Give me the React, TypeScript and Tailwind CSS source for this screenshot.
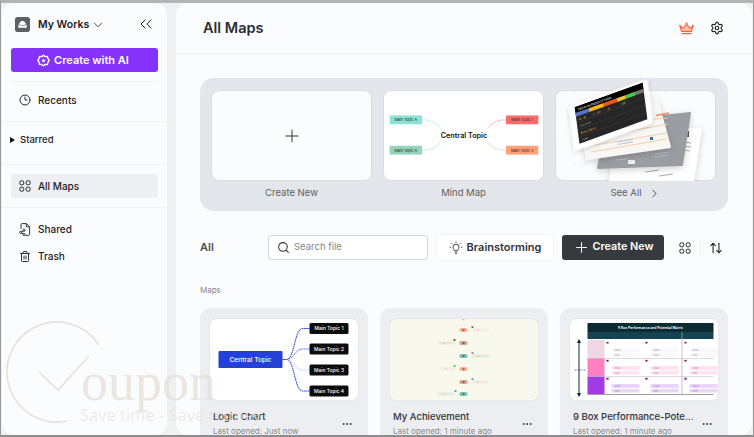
import React from "react";
import { ChevronDown, ChevronsLeft, Clock3, Plus, Trash2, Search, ArrowUpDown, ChevronRight, Settings, Ellipsis } from "lucide-react";

const F = "font-['Inter','Noto_Sans',sans-serif]";

function GridIcon({ className }: { className?: string }) {
  return (
    <svg viewBox="0 0 12 12" className={className} fill="none" stroke="currentColor" strokeWidth="1">
      <rect x="0.8" y="0.8" width="4" height="4" rx="1.6" />
      <rect x="7.2" y="0.8" width="4" height="4" rx="1.6" />
      <rect x="0.8" y="7.2" width="4" height="4" rx="1.6" />
      <rect x="7.2" y="7.2" width="4" height="4" rx="1.6" />
    </svg>
  );
}

function SharedIcon() {
  return (
    <svg viewBox="0 0 12 13" className="h-[13px] w-[12px]" fill="none" stroke="#1f2226" strokeWidth="0.9">
      <path d="M2 6V1.5C2 1 2.4 .6 3 .6H7.5L10.6 3.6V11.5C10.6 12 10.2 12.4 9.6 12.4H6.5" strokeLinejoin="round" />
      <path d="M7.3 .8V3.8H10.4" />
      <circle cx="1.8" cy="9.4" r="1.1" />
      <circle cx="5" cy="7.3" r="1.1" />
      <circle cx="5" cy="11.5" r="1.1" />
      <path d="M2.8 8.8L4 8M2.8 10L4 10.9" />
    </svg>
  );
}

function BulbIcon() {
  return (
    <svg viewBox="0 0 14 14" className="h-[14px] w-[14px]" fill="none" stroke="#33363b" strokeWidth="0.9">
      <path d="M5.4 9.6C5.2 8.6 4 8 4 6.2A3 3 0 0 1 10 6.2C10 8 8.8 8.6 8.6 9.6Z" strokeLinejoin="round" />
      <path d="M5.6 11.2H8.4M6.2 12.8H7.8" />
      <path d="M7 .6V1.9M2.6 2.2L3.5 3.1M11.4 2.2L10.5 3.1M.6 6.2H1.9M12.1 6.2H13.4" />
    </svg>
  );
}

function CrownIcon() {
  return (
    <svg viewBox="0 0 15 13" className="h-[13px] w-[15px]">
      <path d="M1.2 4.2L4.2 6.4L7.5 2L10.8 6.4L13.8 4.2L12.6 9.4H2.4Z" fill="#ffc4b4" stroke="#f9603e" strokeWidth="1.1" strokeLinejoin="round" />
      <path d="M2.6 11.6H12.4" stroke="#f9603e" strokeWidth="1.3" />
      <circle cx="7.5" cy="1.4" r="1" fill="#f9603e" />
      <circle cx="1" cy="3.6" r="0.9" fill="#f9603e" />
      <circle cx="14" cy="3.6" r="0.9" fill="#f9603e" />
    </svg>
  );
}

function NavRow({ icon, label, active }: { icon: React.ReactNode; label: string; active?: boolean }) {
  return (
    <div className={`flex h-6 items-center gap-[7px] rounded-[3px] pl-[8px] text-[10px] font-medium text-[#1f2226] ${active ? "bg-[#edeff2]" : ""}`}>
      {icon}
      <span>{label}</span>
    </div>
  );
}

function MindPreview() {
  const box = (x: number, y: number, fill: string, t: string) => (
    <g>
      <rect x={x} y={y} width="33" height="9" fill={fill} />
      <text x={x + 16.5} y={y + 6} fontSize="3.8" fill="#222" textAnchor="middle" fontFamily="Inter">{t}</text>
    </g>
  );
  return (
    <svg viewBox="0 0 161 91" className="h-full w-full">
      {box(5, 25, "#8ae3d6", "Main Topic A")}
      {box(5, 56, "#95d3b8", "Main Topic A")}
      {box(124, 25, "#ff6b6b", "Main Topic 1")}
      {box(124, 56, "#ffa078", "Main Topic 2")}
      <path d="M38 29.5C47 29.5 51 32 57 38" stroke="#a5e6dc" fill="none" strokeWidth="0.8" strokeDasharray="1.5 .6" />
      <path d="M38 60.5C47 60.5 51 58 57 53" stroke="#a5d9c4" fill="none" strokeWidth="0.8" strokeDasharray="1.5 .6" />
      <path d="M124 29.5C115 29.5 111 32 105 38" stroke="#ff8484" fill="none" strokeWidth="0.8" strokeDasharray="1.5 .6" />
      <path d="M124 60.5C115 60.5 111 58 105 53" stroke="#ffb190" fill="none" strokeWidth="0.8" strokeDasharray="1.5 .6" />
      <text x="81" y="48" fontSize="7.4" fontWeight="600" textAnchor="middle" fill="#111" fontFamily="Inter">Central Topic</text>
    </svg>
  );
}

function StackPreview() {
  return (
    <svg viewBox="0 0 161 91" className="absolute left-[-1px] top-[-1px] h-[91px] w-[161px] overflow-visible">
      <defs>
        <filter id="sh" x="-20%" y="-20%" width="140%" height="140%">
          <feDropShadow dx="0" dy="2" stdDeviation="3" floodColor="#000" floodOpacity="0.18" />
        </filter>
        <clipPath id="cl"><path d="M-10 -30H161V83A8 8 0 0 1 153 91H-10Z" /></clipPath>
        <pattern id="dots" width="9" height="9" patternUnits="userSpaceOnUse">
          <circle cx="2" cy="2" r=".5" fill="#e4e6ea" />
        </pattern>
      </defs>
      <rect width="161" height="91" rx="8" fill="url(#dots)" />
      <g clipPath="url(#cl)">
        <polygon points="62,38 147,38 137,104 52,104" fill="#fff" filter="url(#sh)" />
        <path d="M128 52l8 1M128 56l8 1M128 60l7 1M90 82l14-2M104 86l14-2" stroke="#aaa" strokeWidth="1" />
        <rect x="129" y="41" width="5" height="6" fill="#555" />
        <polygon points="52,32 135,23 127,75 43,78" fill="#9a9da1" stroke="#9a9da1" strokeWidth="2" strokeLinejoin="round" filter="url(#sh)" />
        <rect x="73" y="70" width="7" height="4" fill="#eee" />
        <path d="M100 64l14 -2M100 67l14 -2M60 70l12 -1" stroke="#b8babd" strokeWidth="1" />
        <rect x="109" y="48" width="3" height="3" fill="#eee" />
        <polygon points="25,25 102,9 115,57 32,69" fill="#f8f7f3" stroke="#f8f7f3" strokeWidth="2" strokeLinejoin="round" filter="url(#sh)" />
        <path d="M101 25.5L114 23" stroke="#ef8a5f" strokeWidth="1.6" />
        <path d="M36 62L112 49M40 55L112 43M70 42L113 34M88 30L113 28" stroke="#f3cfae" strokeWidth="1" />
        <path d="M62 52L78 49.5M62 54.5L78 52" stroke="#b9c4e4" strokeWidth="1" />
        <rect x="95" y="47" width="3" height="3" fill="#2f6fb0" />
      </g>
      <g transform="matrix(.78 -.28 .095 .73 14 17)">
        <rect x="0" y="0" width="100" height="60" rx="3" fill="#fff" stroke="#fff" strokeWidth="1" filter="url(#sh)" />
        <rect x="7" y="3" width="87" height="50" fill="#262626" />
        <rect x="7" y="3" width="87" height="8" fill="#000" />
        <rect x="7" y="11" width="17" height="5" fill="#5572c8" />
        <rect x="24" y="11" width="19" height="5" fill="#f5b617" />
        <rect x="43" y="11" width="17" height="5" fill="#f0551f" />
        <rect x="60" y="11" width="11" height="5" fill="#f5c542" />
        <rect x="71" y="11" width="12" height="5" fill="#4cc94c" />
        <rect x="83" y="11" width="11" height="5" fill="#777" />
        <text x="10" y="9" fontSize="4" fill="#fff" fontFamily="Inter">TEAM INTRODUCTION</text>
        <path d="M7 24h87M7 34h87M7 44h87" stroke="#444" strokeWidth=".5" />
        <text x="10" y="22" fontSize="3.6" fill="#e8bd3a" fontFamily="Inter">A - B</text>
        <text x="28" y="22" fontSize="3.6" fill="#e8bd3a" fontFamily="Inter">1 - 20</text>
        <text x="47" y="22" fontSize="3.6" fill="#e8bd3a" fontFamily="Inter">8</text>
        <text x="64" y="22" fontSize="3.6" fill="#e8bd3a" fontFamily="Inter">138</text>
        <text x="10" y="31" fontSize="3.2" fill="#bbb" fontFamily="Inter">Overview</text>
        <text x="10" y="41" fontSize="3.6" fill="#e8bd3a" fontFamily="Inter">Brave Spirit</text>
        <text x="10" y="50" fontSize="3.2" fill="#bbb" fontFamily="Inter">Goals</text>
      </g>
    </svg>
  );
}

function LogicPreview() {
  const ys = [9.5, 30, 51, 72];
  return (
    <svg viewBox="0 0 147 81" className="h-full w-full">
      <rect x="8" y="32" width="64" height="17" rx="1" fill="#2440d8" />
      <text x="40" y="43.3" fontSize="6.6" fill="#fff" textAnchor="middle" fontWeight="500" fontFamily="Inter">Central Topic</text>
      {ys.map((y, i) => (
        <g key={y}>
          <path d={`M72 40.5H76C84 40.5 84 ${y} 92 ${y}H99`} fill="none" stroke={i === 2 ? "#c9d2f7" : i === 1 ? "#5b73ea" : "#2440d8"} strokeWidth="1" strokeDasharray="1.6 .5" />
          <rect x="99" y={y - 5.5} width="39" height="11" rx="1.5" fill="#0c0c0c" />
          <text x="118.5" y={y + 1.8} fontSize="4.9" fill="#fff" textAnchor="middle" fontWeight="500" fontFamily="Inter">{`Main Topic ${i + 1}`}</text>
        </g>
      ))}
    </svg>
  );
}

function AchievementPreview() {
  const rows: [number, string, number, number, string, string, number][] = [
    [11, "#ffae98", 82, 17, "#f9ebe2", "#444", 81],
    [24, "#d6a98c", 48, 16, "#f0e6d8", "#333", 63],
    [37, "#7cc4b8", 82, 17, "#e0ecdf", "#668", 81],
    [50, "#ffb296", 50, 15, "#f9ebe2", "#2a2", 63],
    [63, "#d6a98c", 82, 16, "#f5e9da", "#28c", 81],
    [75, "#7cc4b8", 47, 17, "#e0ecdf", "#28a", 64],
  ];
  return (
    <svg viewBox="0 0 147 81" className="h-full w-full">
      <rect width="147" height="81" fill="#f8f8ec" />
      <rect x="72" y="0" width="2" height="1.5" fill="#ffae98" />
      {rows.map(([y, c, x, w, bg, fc, fx]) => (
        <g key={y}>
          <rect x="69" y={y - 2} width="8" height="4" rx="1.5" fill={c} />
          <rect x="72" y={y - 0.5} width="2" height="1" fill="#222" />
          <rect x={x} y={y - 1.5} width={w} height="3" fill={bg} />
          <rect x={x + 5} y={y - 0.4} width="1" height="0.8" fill="#a88" />
          <rect x={fx} y={y - 3.6} width="2" height="1.4" fill={fc} />
        </g>
      ))}
    </svg>
  );
}

function NineBoxPreview() {
  const colTints = ["#fbf6fb", "#ffe3ef", "#ead6fa"];
  const sides = ["#eed6e4", "#ff7fc0", "#a23be3"];
  const ys = [21, 39, 57];
  const xs = [34, 73, 112];
  return (
    <svg viewBox="0 0 147 81" className="h-full w-full">
      <rect width="147" height="81" fill="#fff" />
      <rect x="17" y="4" width="126" height="9" fill="#0b2a33" />
      <text x="80" y="10" fontSize="3.4" fill="#fff" textAnchor="middle" fontWeight="600" fontFamily="Inter">9 Box Performance and Potential Matrix</text>
      <rect x="17" y="13" width="126" height="7" fill="#154352" />
      {sides.map((c, i) => (
        <rect key={c} x="17" y={ys[i]} width="17" height="18" fill={c} />
      ))}
      {ys.map((y, r) =>
        xs.map((x) => (
          <g key={x + "-" + y}>
            <rect x={x + 1} y={y + 1} width="4" height="3.5" fill={colTints[r]} />
            <rect x={x + 2} y={y + 2} width="2" height="1.4" fill="#5a1050" />
            <rect x={x + 7} y={y + 8} width="28" height="4" fill={colTints[r]} />
            <rect x={x + 7} y={y + 13} width="28" height="3.5" fill={colTints[r]} />
            <path d={`M${x + 10} ${y + 10}h6M${x + 10} ${y + 15}h5`} stroke="#8a5a9a" strokeWidth=".5" />
          </g>
        ))
      )}
      <path d="M17 39.5H143M17 57.5H143" stroke="#ccc" strokeWidth=".7" />
      <path d="M17 75.5H143" stroke="#888" strokeWidth=".8" />
      <path d="M111.5 13V75" stroke="#aaa" strokeWidth=".7" />
      <path d="M8.5 21V77" stroke="#0b2a33" strokeWidth="1" />
      <path d="M6.5 24L8.5 20L10.5 24ZM6.5 74L8.5 78L10.5 74Z" fill="#0b2a33" />
      <path d="M4 51H15" stroke="#333" strokeWidth=".6" strokeDasharray="2 1" />
    </svg>
  );
}

function TemplateCard({ label, children, extra }: { label: string; children: React.ReactNode; extra?: React.ReactNode }) {
  return (
    <div className="flex w-[161px] flex-col">
      <div className="relative h-[91px] rounded-lg border border-[#d9dce1] bg-[#fbfcfe]">{children}</div>
      <div className="mt-[5px] flex h-[14px] items-center justify-center gap-[6px] text-[9.5px] text-[#5d6066]">
        <span>{label}</span>
        {extra}
      </div>
    </div>
  );
}

function FileCard({ title, sub, children }: { title: string; sub: string; children: React.ReactNode }) {
  return (
    <div className="w-[168px] shrink-0 rounded-t-[10px] bg-[#eceef1] px-[10px] pt-[11px]">
      <div className="h-[81px] overflow-hidden rounded-md bg-white shadow-[0_0_1px_rgba(0,0,0,0.25)]">{children}</div>
      <div className="mt-[10px] flex items-start justify-between pl-[3px]">
        <div className="min-w-0">
          <div className="text-[9.5px] font-medium leading-[13px] text-[#303338]">{title}</div>
          <div className="mt-[3px] text-[8px] leading-[11px] text-[#85888e]">{sub}</div>
        </div>
        <Ellipsis className="mr-[5px] mt-[8px] h-[12px] w-[12px] shrink-0 text-[#333]" strokeWidth={2} />
      </div>
    </div>
  );
}

export default function App() {
  return (
    <div className={`${F} relative flex h-[437px] w-[754px] gap-[9px] overflow-hidden border-x border-x-[#9a9a9a] border-t-[3px] border-b-[2px] border-t-[#b4b4b4] border-b-[#8c8c8c] bg-[#eef0f2] pl-[1px] pr-[1px]`}>
      <aside className="flex w-[165px] shrink-0 flex-col rounded-xl bg-[#fbfcfe]">
        <div className="flex h-[45px] shrink-0 items-start justify-between pl-[13px] pr-[11px] pt-[14px]">
          <div className="flex items-center">
            <svg viewBox="0 0 16 16" className="h-[15px] w-[15px]">
              <rect width="16" height="16" rx="3" fill="#5c5f63" />
              <path d="M3.5 8.5L5.5 5.5C6.5 4 9.5 4 10.5 5.5L12.5 8.5V11.5H3.5Z" fill="#fff" />
              <path d="M3.5 8.5H6.3C6.8 9.7 9.2 9.7 9.7 8.5H12.5" stroke="#5c5f63" strokeWidth=".8" fill="none" />
            </svg>
            <span className="ml-[8px] text-[10.5px] font-semibold text-[#1d2024]">My Works</span>
            <ChevronDown className="ml-[2px] h-[14px] w-[14px] text-[#333]" strokeWidth={1.5} />
          </div>
          <ChevronsLeft className="h-[20px] w-[20px] -translate-y-[3px] text-[#222]" strokeWidth={1.2} />
        </div>
        <div className="px-[9px]">
          <div className="flex h-6 items-center justify-center gap-[4px] rounded-[3px] bg-[#8533fb] pr-[3px] text-[11px] font-semibold text-white">
            <svg viewBox="0 0 16 16" className="h-[13px] w-[13px]" fill="none" stroke="#fff" strokeWidth="1.7">
              <path d="M8 1.5L10 3.2L12.8 3L13.5 5.8L15 8L13.5 10.2L12.8 13L10 12.8L8 14.5L5.5 13L3 12.8L2.6 10L1 8L2.6 5.8L3.2 3L6 3.2Z" strokeLinejoin="round" />
              <path d="M8 5.5L8.8 7.2L10.6 7.4L9.2 8.6L9.6 10.4L8 9.5L6.4 10.4L6.8 8.6L5.4 7.4L7.2 7.2Z" fill="#fff" stroke="none" />
            </svg>
            <span>Create with AI</span>
          </div>
          <div className="mt-[9px] border-t border-[#f0f1f4]" />
          <div className="mt-[6px]">
            <NavRow icon={<Clock3 className="h-[12px] w-[12px]" strokeWidth={1.9} />} label="Recents" />
          </div>
        </div>
        <div className="mt-[9px] border-t border-[#f0f1f4]" />
        <div className="flex h-[42px] items-start gap-[5px] pl-[8px] pt-[12px] text-[9.5px] font-medium leading-[12px] text-[#1f2226]">
          <svg viewBox="0 0 5 6" className="mt-[3px] h-[6px] w-[5px]"><path d="M0 0L5 3L0 6Z" fill="#111" /></svg>
          <span>Starred</span>
        </div>
        <div className="border-t border-[#f0f1f4]" />
        <div className="mt-[9px] px-[9px]">
          <NavRow active icon={<GridIcon className="h-[12px] w-[12px] text-[#222]" />} label="All Maps" />
        </div>
        <div className="mt-[9px] border-t border-[#f0f1f4]" />
        <div className="mt-[9px] flex flex-col gap-[3px] px-[9px]">
          <NavRow icon={<SharedIcon />} label="Shared" />
          <NavRow icon={<Trash2 className="h-[13px] w-[12px]" strokeWidth={1.9} />} label="Trash" />
        </div>
      </aside>

      <main className="flex min-w-0 flex-1 flex-col overflow-hidden rounded-xl bg-[#fbfcfe]">
        <header className="flex h-[51px] shrink-0 items-center justify-between border-b border-[#f0f1f4] pl-[27px] pr-[28px]">
          <h1 className="text-[14.5px] font-semibold text-[#2b2e33]">All Maps</h1>
          <div className="flex items-center gap-[16px]">
            <CrownIcon />
            <Settings className="h-[14px] w-[14px] text-[#222]" strokeWidth={2} />
          </div>
        </header>

        <div className="px-[24px] pt-[24px]">
          <section className="flex h-[133px] gap-[11px] rounded-[14px] bg-[#e3e6ea] px-[11px] pt-[12px]">
            <TemplateCard label="Create New">
              <div className="flex h-full items-center justify-center">
                <Plus className="h-[20px] w-[20px] text-[#333]" strokeWidth={1.2} />
              </div>
            </TemplateCard>
            <TemplateCard label="Mind Map">
              <div className="h-full overflow-hidden rounded-lg bg-white"><MindPreview /></div>
            </TemplateCard>
            <TemplateCard label="See All" extra={<ChevronRight className="h-[13px] w-[13px] text-[#333]" strokeWidth={1.6} />}>
              <StackPreview />
            </TemplateCard>
          </section>

          <div className="mt-[24px] flex h-[25px] items-center">
            <span className="w-[68px] text-[11px] font-semibold text-[#4a4d52]">All</span>
            <div className="flex h-[25px] w-[160px] items-center gap-[4px] rounded-[3px] border border-[#d4d7dc] bg-white px-[8px] text-[9.5px] text-[#85888e]">
              <Search className="h-[13px] w-[13px] text-[#333]" strokeWidth={1.9} />
              <span>Search file</span>
            </div>
            <div className="ml-[9px] flex h-[25px] w-[116px] items-center justify-center gap-[4px] rounded-[3px] bg-white text-[11px] font-semibold text-[#33363b] shadow-[0_0_3px_rgba(0,0,0,0.08)]">
              <BulbIcon />
              <span>Brainstorming</span>
            </div>
            <div className="ml-[9px] flex h-[25px] w-[102px] items-center justify-center gap-[3px] rounded-[3px] bg-[#36393d] text-[10.8px] font-semibold text-white">
              <Plus className="h-[17px] w-[17px]" strokeWidth={1.4} />
              <span>Create New</span>
            </div>
            <GridIcon className="ml-[15px] h-[12px] w-[12px] text-[#222]" />
            <div className="ml-[9px] h-[14px] border-l border-[#f0f1f4]" />
            <ArrowUpDown className="ml-[8px] h-[14px] w-[14px] text-[#222]" strokeWidth={1.8} />
          </div>

          <div className="mt-[25px] text-[8px] leading-[11px] text-[#85888e]">Maps</div>

          <div className="mt-[12px] flex gap-[12px]">
            <FileCard title="Logic Chart" sub="Last opened: Just now"><LogicPreview /></FileCard>
            <FileCard title="My Achievement" sub="Last opened: 1 minute ago"><AchievementPreview /></FileCard>
            <FileCard title="9 Box Performance-Pote..." sub="Last opened: 1 minute ago"><NineBoxPreview /></FileCard>
          </div>
        </div>
      </main>

      <svg viewBox="0 0 260 120" className="pointer-events-none absolute bottom-[0px] left-[0px] h-[120px] w-[260px]">
        <g transform="translate(-1 -315)" fill="none" stroke="#e6ddd4" strokeWidth="1.6" opacity="0.9">
          <path d="M99 345A50 50 0 1 0 67 421" />
          <path d="M39 372L58 390L89 356" />
        </g>
        <text x="80" y="85" fontFamily="'Liberation Serif',serif" fontSize="54" fill="#e6ddd5" opacity="0.7">oupon</text>
        <text x="79" y="106" fontFamily="'Open Sans',sans-serif" fontSize="16.5" fill="#e6ddd5" opacity="0.6">Save time - Save money</text>
      </svg>
    </div>
  );
}
